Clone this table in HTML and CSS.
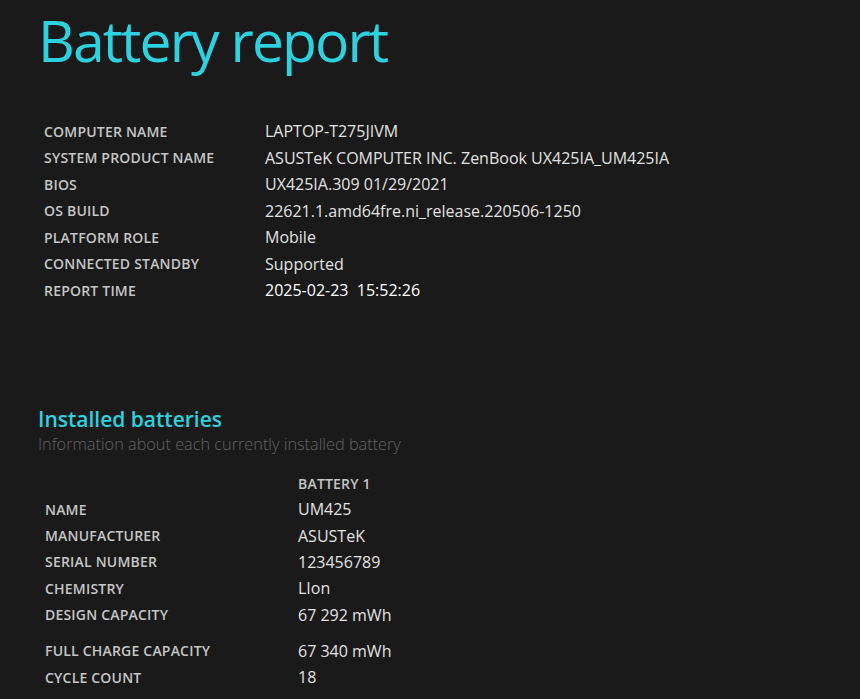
FILE: index.html
```html
<!DOCTYPE html>
<html>
<head>
<meta charset="utf-8">
<link rel="stylesheet" href="styles.css">
</head>
<body>
<main class="page">
  <h1 class="title">Battery report</h1>
  <div class="info">
    <div class="row"><span class="label">COMPUTER NAME</span><span class="value">LAPTOP-T275JIVM</span></div>
    <div class="row"><span class="label">SYSTEM PRODUCT NAME</span><span class="value">ASUSTeK COMPUTER INC. ZenBook UX425IA_UM425IA</span></div>
    <div class="row"><span class="label">BIOS</span><span class="value">UX425IA.309 01/29/2021</span></div>
    <div class="row"><span class="label">OS BUILD</span><span class="value">22621.1.amd64fre.ni_release.220506-1250</span></div>
    <div class="row"><span class="label">PLATFORM ROLE</span><span class="value">Mobile</span></div>
    <div class="row"><span class="label">CONNECTED STANDBY</span><span class="value">Supported</span></div>
    <div class="row"><span class="label">REPORT TIME</span><span class="value strong">2025-02-23&nbsp; 15:52:26</span></div>
  </div>

  <section class="section">
    <h2 class="heading">Installed batteries</h2>
    <p class="sub">Information about each currently installed battery</p>
    <div class="batt">
      <div class="row head"><span class="label"></span><span class="label">BATTERY 1</span></div>
      <div class="row"><span class="label">NAME</span><span class="value">UM425</span></div>
      <div class="row"><span class="label">MANUFACTURER</span><span class="value">ASUSTeK</span></div>
      <div class="row"><span class="label">SERIAL NUMBER</span><span class="value">123456789</span></div>
      <div class="row"><span class="label">CHEMISTRY</span><span class="value">LIon</span></div>
      <div class="row"><span class="label">DESIGN CAPACITY</span><span class="value">67 292 mWh</span></div>
      <div class="row gap"><span class="label">FULL CHARGE CAPACITY</span><span class="value">67 340 mWh</span></div>
      <div class="row"><span class="label">CYCLE COUNT</span><span class="value">18</span></div>
    </div>
  </section>
</main>
</body>
</html>
```

FILE: styles.css
```css
html, body {
  margin: 0;
  padding: 0;
  background: #1a1a1a;
}
body {
  font-family: "Open Sans", "Noto Sans", sans-serif;
  color: #e0e0e0;
}
.page {
  padding: 0 0 0 38px;
}
.title {
  margin: 0;
  padding-top: 2px;
  font-size: 57px;
  font-weight: 400;
  line-height: 76px;
  color: #2cd2df;
  letter-spacing: -1.9px;
}
.info {
  margin-top: 40px;
  padding-left: 6px;
}
.row {
  display: grid;
  grid-template-columns: 221px auto;
  height: 26.5px;
  align-items: center;
}
.label {
  font-size: 14px;
  font-weight: 600;
  color: #c6c6c6;
  letter-spacing: 0.2px;
}
.value {
  font-size: 16px;
  font-weight: 400;
  color: #e2e2e2;
}
.value.strong {
  color: #ffffff;
  font-weight: 500;
}
.section {
  margin-top: 101px;
}
.heading {
  margin: 0;
  font-size: 21px;
  font-weight: 600;
  line-height: 28px;
  color: #2cd2df;
}
.sub {
  margin: 0;
  font-size: 16.3px;
  font-weight: 300;
  line-height: 22px;
  color: #646464;
}
.batt {
  margin-top: 17px;
  padding-left: 7px;
}
.batt .row {
  grid-template-columns: 253px auto;
  height: 26.4px;
}
.batt .row.head {
  height: 24.5px;
}
.batt .row.gap {
  margin-top: 9.5px;
}
```
